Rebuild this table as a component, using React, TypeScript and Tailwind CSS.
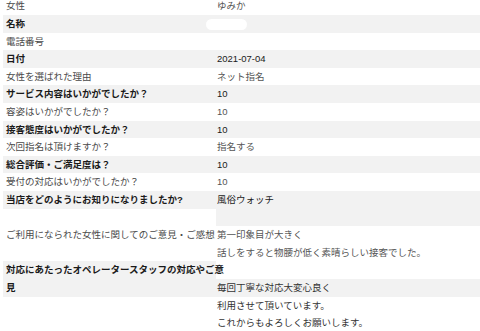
import type { ReactNode } from 'react';

type Row = {
  label: ReactNode;
  lines: ReactNode[];
  shaded: boolean;
};

const rows: Row[] = [
  { label: '女性', lines: ['ゆみか'], shaded: false },
  {
    label: '名称',
    lines: [<span key="p" className="inline-block align-middle ml-[-11px] w-[41px] h-[11px] rounded-full bg-white" />],
    shaded: true,
  },
  { label: '電話番号', lines: [''], shaded: false },
  { label: '日付', lines: ['2021-07-04'], shaded: true },
  { label: '女性を選ばれた理由', lines: ['ネット指名'], shaded: false },
  { label: 'サービス内容はいかがでしたか？', lines: ['10'], shaded: true },
  { label: '容姿はいかがでしたか？', lines: ['10'], shaded: false },
  { label: '接客態度はいかがでしたか？', lines: ['10'], shaded: true },
  { label: '次回指名は頂けますか？', lines: ['指名する'], shaded: false },
  { label: '総合評価・ご満足度は？', lines: ['10'], shaded: true },
  { label: '受付の対応はいかがでしたか？', lines: ['10'], shaded: false },
  { label: '当店をどのようにお知りになりましたか?', lines: ['風俗ウォッチ', ''], shaded: true },
  {
    label: 'ご利用になられた女性に関してのご意見・ご感想',
    lines: ['第一印象目が大きく', '話しをすると物腰が低く素晴らしい接客でした。'],
    shaded: false,
  },
];

function Line({ children }: { children: ReactNode }) {
  return <div className="h-[17.6px] whitespace-nowrap">{children === '' ? '\u00a0' : children}</div>;
}

export default function App() {
  return (
    <div
      className="w-[480px] h-[331px] overflow-hidden bg-white pl-[3px] text-[9.5px] leading-[17.6px]"
      style={{ fontFamily: '"Liberation Sans", "Noto Sans CJK JP", sans-serif' }}
    >
      <div className="-mt-[2.6px]">
        {rows.map((row, i) => (
          <div key={i} className="grid grid-cols-[213px_1fr] items-start">
            <div
              className={
                row.shaded
                  ? 'bg-[#f2f2f2] pl-[3px] font-bold text-[#1a1a1a] whitespace-nowrap'
                  : 'pl-[3px] text-[#4a4a4a] whitespace-nowrap'
              }
            >
              {row.label}
            </div>
            <div className={row.shaded ? 'bg-[#f2f2f2] pl-[1px] text-[#1a1a1a]' : 'pl-[1px] text-[#555]'}>
              {row.lines.map((l, j) => (
                <Line key={j}>{l}</Line>
              ))}
            </div>
          </div>
        ))}

        <div className="grid grid-cols-[213px_1fr] items-start">
          <div className="bg-[#f2f2f2] pl-[3px] font-bold text-[#1a1a1a] whitespace-nowrap">
            <Line>対応にあたったオペレータースタッフの対応やご意</Line>
            <Line>見</Line>
          </div>
          <div className="pl-[1px] text-[#333]">
            <Line>{''}</Line>
            <div className="bg-[#f2f2f2] -ml-[1px] pl-[1px]">
              <Line>毎回丁寧な対応大変心良く</Line>
            </div>
            <Line>利用させて頂いています。</Line>
            <Line>これからもよろしくお願いします。</Line>
          </div>
        </div>
      </div>
    </div>
  );
}
